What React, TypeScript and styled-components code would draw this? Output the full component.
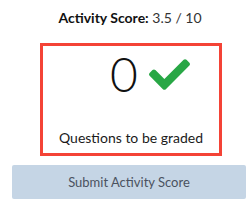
import styled, { createGlobalStyle } from "styled-components";

const GlobalStyle = createGlobalStyle`
  body {
    margin: 0;
    background: #fff;
    font-family: Lato, "Noto Sans", sans-serif;
    color: #222;
  }
`;

const Panel = styled.div`
  width: 234px;
  margin-left: 12px;
  display: flex;
  flex-direction: column;
`;

const Header = styled.div`
  height: 43px;
  display: flex;
  align-items: center;
  justify-content: center;
  padding-left: 2px;
  padding-bottom: 8px;
  box-sizing: border-box;
  font-size: 14px;
  color: #333;
  b {
    color: #111;
    font-weight: 700;
  }
`;

const ScoreBox = styled.div`
  width: 182px;
  height: 113px;
  margin-left: 28px;
  box-sizing: border-box;
  border: 3px solid #f44336;
  display: flex;
  flex-direction: column;
  align-items: center;
`;

const CountRow = styled.div`
  display: flex;
  align-items: center;
  gap: 11px;
  margin-left: 38px;
`;

const Count = styled.span`
  font-size: 48px;
  line-height: 56px;
  font-weight: 300;
  color: #111;
`;

const Caption = styled.div`
  margin-top: 27px;
  font-size: 14px;
  color: #1a1a1a;
`;

const SubmitButton = styled.button`
  margin-top: 9px;
  height: 34px;
  width: 100%;
  border: none;
  border-radius: 2px;
  background: #c5d5e5;
  color: #4a5260;
  font-family: inherit;
  font-size: 13px;
  cursor: default;
`;

const Check = () => (
  <svg width="41" height="31" viewBox="0 65 512 383" fill="#28a745">
    <path d="M173.898 439.404l-166.4-166.4c-9.997-9.997-9.997-26.206 0-36.204l36.203-36.204c9.997-9.998 26.207-9.998 36.204 0L192 312.69 432.095 72.596c9.997-9.997 26.207-9.997 36.204 0l36.203 36.204c9.997 9.997 9.997 26.206 0 36.204l-294.4 294.401c-9.998 9.997-26.207 9.997-36.204-.001z" />
  </svg>
);

export default function App() {
  return (
    <>
      <GlobalStyle />
      <Panel>
        <Header>
          <span>
            <b>Activity Score:</b> 3.5 / 10
          </span>
        </Header>
        <ScoreBox>
          <CountRow>
            <Count>0</Count>
            <Check />
          </CountRow>
          <Caption>Questions to be graded</Caption>
        </ScoreBox>
        <SubmitButton>Submit Activity Score</SubmitButton>
      </Panel>
    </>
  );
}
